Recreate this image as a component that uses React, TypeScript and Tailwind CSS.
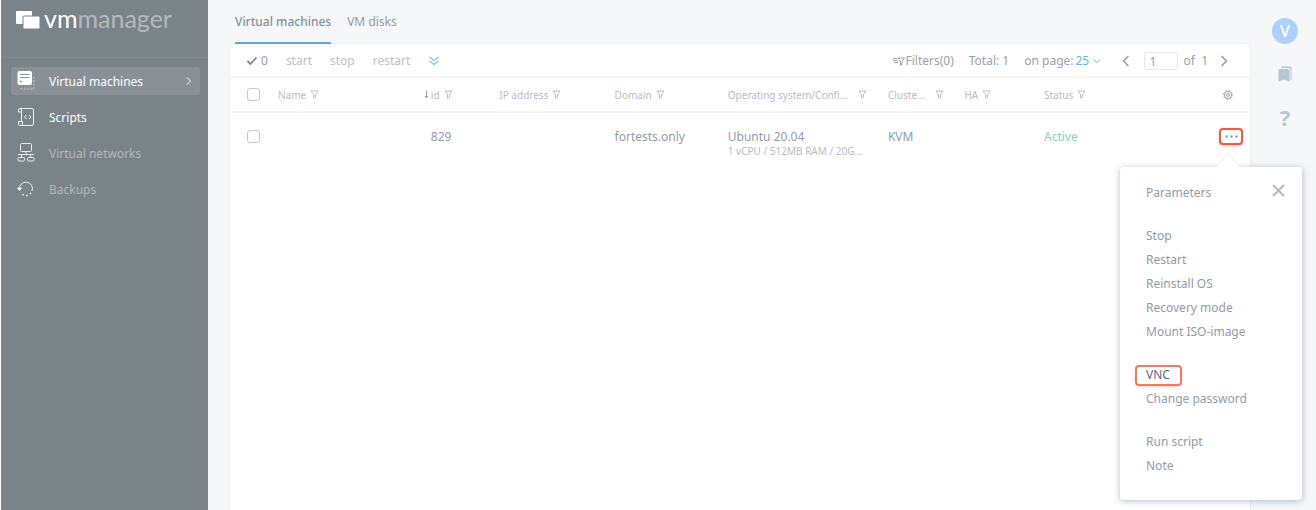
import type { ReactNode } from "react";
import clsx from "clsx";

const navItems = [
  {
    label: "Virtual machines",
    state: "active",
    icon: (
      <svg viewBox="0 0 18 20" className="h-5 w-[18px]" fill="none" aria-hidden>
        <path d="M16 6.500h1v11.500H4v-2" stroke="#c3c8cc" strokeDasharray="2 1.500" />
        <rect x="0.500" y="0" width="14.500" height="14" rx="2" fill="#fff" />
        <path d="M3 3.500h9.500M3 6.500h9.500" stroke="#8b9297" />
        <path d="M3 10.500h1.500" stroke="#6b7378" strokeWidth="1.500" />
      </svg>
    ),
  },
  {
    label: "Scripts",
    state: "enabled",
    icon: (
      <svg viewBox="0 0 18 20" className="h-5 w-[18px]" fill="none" stroke="#eef0f1" aria-hidden>
        <path d="M4.500 14.500V3a1.500 1.500 0 0 0-3 0v2h3M3 1.500h12a1.500 1.500 0 0 1 1.500 1.500v14a1.500 1.500 0 0 1-1.500 1.500H3A1.500 1.500 0 0 1 1.500 17v-2.500h4V17a1.500 1.500 0 0 1-1.500 1.500" />
        <path d="M9.500 8 7.500 10l2 2M12 8l2 2-2 2" />
      </svg>
    ),
  },
  {
    label: "Virtual networks",
    state: "muted",
    icon: (
      <svg viewBox="0 0 18 20" className="h-5 w-[18px]" fill="none" stroke="#e8ebec" aria-hidden>
        <rect x="3.500" y="0.500" width="11" height="8" rx="1" />
        <path d="M9 8.500v3M4.500 14.500v-3h9v3M1 11.500h16" />
        <rect x="1" y="14.500" width="6.500" height="3.500" rx="1" />
        <rect x="10.500" y="14.500" width="6.500" height="3.500" rx="1" />
      </svg>
    ),
  },
  {
    label: "Backups",
    state: "muted",
    icon: (
      <svg viewBox="0 0 18 20" className="h-5 w-[18px]" fill="none" stroke="#eef0f1" aria-hidden>
        <path d="M2.500 10.500a6.500 6.500 0 1 1 12.500 1.500" />
        <path d="M14 14a6.500 6.500 0 0 1-10.500-.5" strokeDasharray="1.500 2.500" strokeWidth="1.500" />
        <path d="m.5 9 2 2.500 2-2.500z" fill="#eef0f1" />
      </svg>
    ),
  },
];

const menuGroups = [
  ["Parameters"],
  ["Stop", "Restart", "Reinstall OS", "Recovery mode", "Mount ISO-image"],
  ["VNC", "Change password"],
  ["Run script", "Note"],
];

function FilterIcon() {
  return (
    <svg viewBox="0 0 9 9" className="h-[9px] w-[9px] shrink-0" fill="none" stroke="#b9bcc1" aria-hidden>
      <path d="M1 1h7L5.500 4.500v2.800l-2 .9V4.500z" />
    </svg>
  );
}

function Chevron({ d, className }: { d: string; className: string }) {
  return (
    <svg viewBox="0 0 10 10" className={className} fill="none" stroke="currentColor" aria-hidden>
      <path d={d} />
    </svg>
  );
}

function HeaderCell({ label, wide, sorted }: { label: string; wide?: boolean; sorted?: boolean }) {
  return (
    <th className="p-0 text-left font-normal" aria-sort={sorted ? "descending" : undefined}>
      <button type="button" className={clsx("flex items-center whitespace-nowrap", wide ? "gap-2.5" : "gap-1")}>
        <span className="flex items-center gap-0.5">
          {sorted && (
            <svg viewBox="0 0 5 9" className="h-[9px] w-[5px]" fill="none" stroke="#999fa7" aria-hidden>
              <path d="M2.500 0.500v7.500M.8 6l1.700 2 1.700-2" />
            </svg>
          )}
          {label}
        </span>
        <FilterIcon />
      </button>
    </th>
  );
}

function Checkbox({ label }: { label: string }) {
  return (
    <input
      type="checkbox"
      aria-label={label}
      className="ml-[17px] block h-[13px] w-[13px] appearance-none rounded-[3px] border border-[#c6c8cb] bg-white"
    />
  );
}

function Sidebar() {
  return (
    <aside className="ml-px w-[207px] shrink-0 bg-[#7a8388]">
      <div className="flex h-[58px] items-start gap-1 border-b border-[#858d92] pt-1.5 pl-[15px]">
        <svg viewBox="0 0 24 18" className="mt-[5px] h-[18px] w-6" aria-hidden>
          <rect x="0" y="0" width="16" height="13" rx="1" fill="#fff" />
          <rect x="7" y="5" width="17" height="13" rx="1" fill="#fff" stroke="#7a8388" />
        </svg>
        <span className="font-[Lato,sans-serif] text-[25px] leading-6 text-[#b4b9bd]">
          <span className="text-white">vm</span>manager
        </span>
      </div>
      <nav className="mt-[9px] flex flex-col gap-2 pr-2 pl-2.5">
        {navItems.map((item) => (
          <a
            key={item.label}
            href="#"
            className={clsx(
              "flex h-7 items-center rounded-[3px] pr-2 pl-1.5",
              item.state === "active" && "bg-[#899196] text-white",
              item.state === "enabled" && "text-white",
              item.state === "muted" && "text-[#b2b7ba]",
            )}>
            {item.icon}
            <span className="ml-3.5 pt-0.5">{item.label}</span>
            {item.state === "active" && <Chevron d="m5 1.500 3.500 3.500L5 8.500" className="ml-auto h-2.5 w-2.5" />}
          </a>
        ))}
      </nav>
    </aside>
  );
}

function Toolbar() {
  return (
    <div className="flex h-[34px] items-center border-b-2 border-[#f4f5f6] pt-0.5 pr-5 pl-4 text-[#9aa1ab]">
      <svg viewBox="0 0 12 10" className="h-2.5 w-3" fill="none" stroke="#7d8792" strokeWidth="1.800" aria-hidden>
        <path d="m1.500 5 3 3 6-6.500" />
      </svg>
      <span className="ml-[3px]">0</span>
      <div className="ml-[18px] flex items-center gap-[18px] text-[#bfc2c6]">
        <button type="button">start</button>
        <button type="button">stop</button>
        <button type="button">restart</button>
        <button type="button" aria-label="More actions" className="text-[#7fbdec]">
          <svg viewBox="0 0 12 10" className="h-2.5 w-3" fill="none" stroke="currentColor" strokeWidth="1.200" aria-hidden>
            <path d="m1.500 1 4.500 3.500L10.500 1M1.500 5 6 8.500 10.500 5" />
          </svg>
        </button>
      </div>
      <button type="button" className="ml-auto flex items-center">
        <svg viewBox="0 0 12 9" className="h-[9px] w-3" fill="none" stroke="#9aa1ab" aria-hidden>
          <path d="M0 1.500h4M0 3.500h4.500M1 5.500h4M5 1h6.500L9 4.500v3l-1.500.7V4.500z" />
        </svg>
        Filters(0)
      </button>
      <span className="ml-[15px]">Total: 1</span>
      <label className="ml-[15px] flex items-center">
        on page:
        <span className="ml-0.5 flex items-center text-[#6fb3e6]">
          <select className="w-4 appearance-none bg-transparent outline-none">
            <option>25</option>
          </select>
          <Chevron d="m1.500 3.500 3.500 3 3.500-3" className="h-2.5 w-2.5" />
        </span>
      </label>
      <button type="button" aria-label="Previous page" className="ml-[18px]">
        <Chevron d="M7 .8 3 5l4 4.200" className="h-3 w-3 stroke-[1.400]" />
      </button>
      <input
        aria-label="Page"
        defaultValue="1"
        className="ml-3 h-[18px] w-[34px] rounded-xs border border-[#e6e8ea] bg-white pl-[5px]"
      />
      <span className="ml-1.5 whitespace-pre">of  1</span>
      <button type="button" aria-label="Next page" className="ml-2.5">
        <Chevron d="m3 .8 4 4.200-4 4.200" className="h-3 w-3 stroke-[1.400]" />
      </button>
    </div>
  );
}

function ActionsMenu() {
  return (
    <div
      role="menu"
      className="absolute top-[39px] -right-[59px] z-10 w-[182px] rounded-[4px] bg-white pt-3.5 pb-[22px] shadow-[0_1px_6px_rgba(90,105,130,0.45)]">
      <svg viewBox="0 0 26 15" className="absolute -top-3.5 left-[95px] h-[15px] w-[26px]" aria-hidden>
        <path d="M0 15 11.500 1.500q1.500-1.500 3 0L26 15z" fill="#fff" />
        <path d="m1 14 10.500-12.500q1.500-1.500 3 0L25 14" fill="none" stroke="#e9ebee" />
      </svg>
      <button type="button" aria-label="Close" className="absolute top-[17px] right-[17px] text-[#b5b7ba]">
        <svg viewBox="0 0 13 13" className="h-[13px] w-[13px]" fill="none" stroke="currentColor" strokeWidth="1.800" aria-hidden>
          <path d="m1 1 11 11M12 1 1 12" />
        </svg>
      </button>
      <div className="flex flex-col gap-[19px]">
        {menuGroups.map((group) => (
          <div key={group[0]} className="flex flex-col items-start pl-[15px]">
            {group.map((label) => (
              <span key={label} className="flex h-6 items-center">
                <button
                  type="button"
                  role="menuitem"
                  className={clsx(
                    "flex h-[21px] items-center rounded-[4px] border-2 pr-2.5 pl-[9px]",
                    label === "VNC"
                      ? "border-[#f5795f] text-[#5f6b7a] shadow-[0_1px_3px_rgba(0,0,0,0.15)]"
                      : "border-transparent text-[#929cab]",
                  )}>
                  {label}
                </button>
              </span>
            ))}
          </div>
        ))}
      </div>
    </div>
  );
}

function Cell({ children }: { children?: ReactNode }) {
  return <td className="p-0 pt-4 align-top whitespace-nowrap">{children}</td>;
}

function MachinesTable() {
  return (
    <table className="w-full table-fixed border-collapse text-[#929cab]">
      <colgroup>
        <col className="w-12" />
        <col className="w-[14.3%]" />
        <col className="w-[7.4%]" />
        <col className="w-[11.3%]" />
        <col className="w-[11.1%]" />
        <col className="w-[15.7%]" />
        <col className="w-[7.5%]" />
        <col className="w-[7.8%]" />
        <col />
        <col className="w-12" />
      </colgroup>
      <thead className="text-[10px] text-[#b9bcc1]">
        <tr className="h-[34px] border-b-2 border-[#f4f5f6]">
          <th className="p-0">
            <Checkbox label="Select all" />
          </th>
          <HeaderCell label="Name" />
          <HeaderCell label="id" sorted />
          <HeaderCell label="IP address" />
          <HeaderCell label="Domain" />
          <HeaderCell label="Operating system/Confi..." wide />
          <HeaderCell label="Cluste..." wide />
          <HeaderCell label="HA" />
          <HeaderCell label="Status" />
          <th className="p-0">
            <button type="button" aria-label="Table settings" className="ml-[21px] block">
              <svg viewBox="0 0 10 10" className="h-2.5 w-2.5" fill="none" stroke="#999fa7" aria-hidden>
                <circle cx="5" cy="5" r="3.600" />
                <circle cx="5" cy="5" r="1.400" />
                <circle cx="5" cy="5" r="4.500" strokeDasharray="1.400 2.130" />
              </svg>
            </button>
          </th>
        </tr>
      </thead>
      <tbody>
        <tr>
          <td className="p-0 pt-[17px] align-top">
            <Checkbox label="Select 829" />
          </td>
          <Cell />
          <td className="p-0 pt-4 pl-[7px] align-top">829</td>
          <Cell />
          <Cell>fortests.only</Cell>
          <Cell>
            Ubuntu 20.04
            <div className="text-[10px] leading-3 text-[#b9bcc1]">1 vCPU / 512MB RAM / 20G...</div>
          </Cell>
          <Cell>KVM</Cell>
          <Cell />
          <Cell>
            <span className="text-[#86d2b5]">Active</span>
          </Cell>
          <td className="p-0 pt-[15px] align-top">
            <div className="relative ml-[17px] w-6">
              <button
                type="button"
                aria-label="Actions"
                aria-haspopup="menu"
                className="flex h-[17px] w-6 items-center justify-center rounded-[4px] border-2 border-[#ef5b47] bg-white shadow-[0_1px_3px_rgba(0,0,0,0.2)]">
                <svg viewBox="0 0 13 3" className="h-[3px] w-[13px]" fill="#8e96a1" aria-hidden>
                  <circle cx="1.500" cy="1.500" r="1.200" />
                  <circle cx="6.500" cy="1.500" r="1.200" />
                  <circle cx="11.500" cy="1.500" r="1.200" />
                </svg>
              </button>
              <ActionsMenu />
            </div>
          </td>
        </tr>
      </tbody>
    </table>
  );
}

function SideRail() {
  return (
    <div className="flex w-[66px] shrink-0 flex-col items-center pt-[18px] pl-1 text-[#b3c5d6]">
      <button
        type="button"
        aria-label="Account"
        className="flex h-[26px] w-[26px] items-center justify-center rounded-full bg-[#acd1ff] text-[16px] font-medium text-white">
        V
      </button>
      <button type="button" aria-label="Documentation" className="mt-[22px]">
        <svg viewBox="0 0 14 16" className="h-4 w-3.5" fill="currentColor" aria-hidden>
          <path d="M3 1.500Q3.500.5 5 .5h7q1.500 0 1.500 1.500v12l-1 .5V4q0-2-2-2H3z" />
          <path d="M.5 4.500Q.5 3 2 3h8q1.500 0 1.500 1.500V15.500L6 13.500.5 15.500z" />
        </svg>
      </button>
      <button type="button" aria-label="Help" className="mt-[18px] text-[22px] leading-[34px] font-bold">
        ?
      </button>
    </div>
  );
}

export default function App() {
  return (
    <div className="flex min-h-screen bg-white font-['Noto_Sans',sans-serif] text-[12px] leading-4">
      <Sidebar />
      <div className="flex min-w-0 flex-1 bg-[#f5f7f8]">
        <main className="flex min-w-0 flex-1 flex-col pl-[22px]">
          <div className="flex h-11 items-stretch gap-4 pl-[5px] text-[#929cab]">
            <button type="button" className="border-b-2 border-[#5fabdc] pt-0.5 font-medium text-[#8491a0]">
              Virtual machines
            </button>
            <button type="button" className="border-b-2 border-transparent pt-0.5">
              VM disks
            </button>
          </div>
          <section className="flex-1 rounded-t-[4px] bg-white shadow-[0_0_2px_rgba(0,0,0,0.12)]">
            <Toolbar />
            <MachinesTable />
          </section>
        </main>
        <SideRail />
      </div>
    </div>
  );
}
